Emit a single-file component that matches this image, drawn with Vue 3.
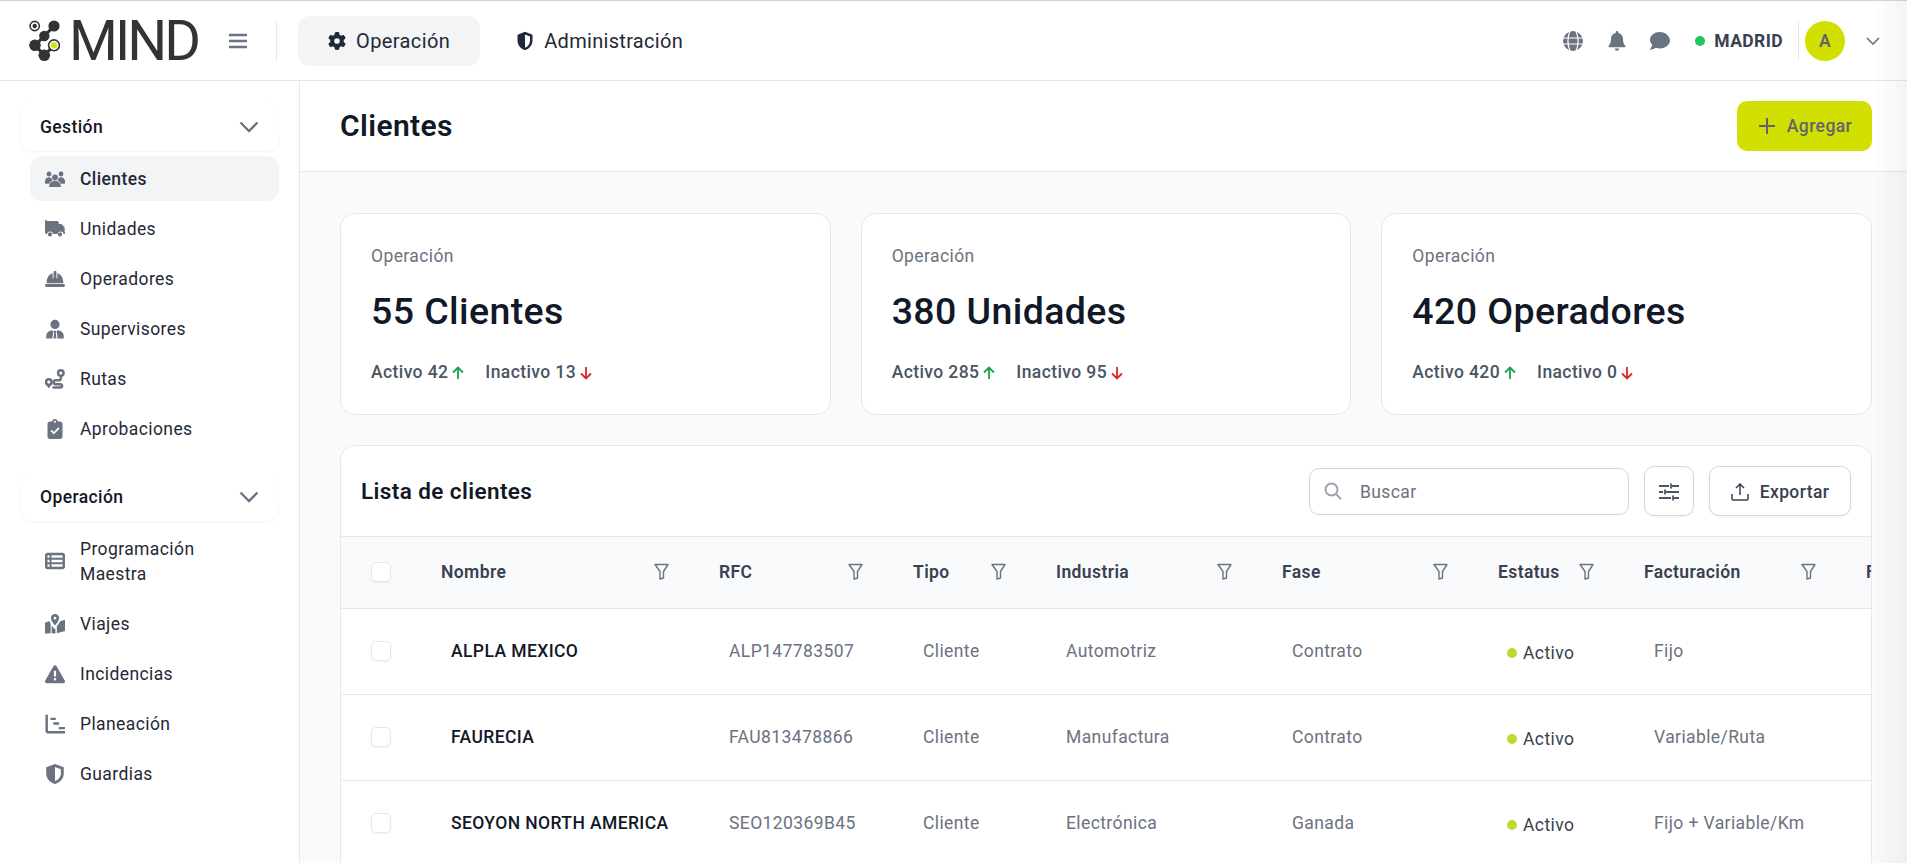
<template>
  <div class="app">
    <header class="topbar">
      <div class="logo">
        <svg class="logo-mark" viewBox="28 20 34 42" width="34" height="42">
          <path d="M54 26 44.3 36 35 45.3 44.3 55.3 54 45.3" fill="none" stroke="#333" stroke-width="3.2" />
          <circle cx="34.7" cy="26" r="4.6" fill="#fff" stroke="#333" stroke-width="1.6" />
          <circle cx="34.7" cy="26" r="2.2" fill="#333" />
          <circle cx="54" cy="26" r="5.6" fill="#333" />
          <circle cx="44.3" cy="36" r="5.2" fill="#333" />
          <circle cx="35" cy="45.3" r="5.8" fill="#333" />
          <circle cx="44.3" cy="55.3" r="5.8" fill="#333" />
          <circle cx="54" cy="45.3" r="5.4" fill="#fff" stroke="#333" stroke-width="1.6" />
          <circle cx="54" cy="45.3" r="3.2" fill="#d4e21a" />
        </svg>
        <span class="logo-text">MIND</span>
      </div>
      <button class="burger">
        <svg viewBox="0 0 18 16" width="18" height="16">
          <path d="M0 2h18M0 8h18M0 14h18" stroke="#6b7280" stroke-width="2.4" fill="none" />
        </svg>
      </button>
      <span class="vline"></span>
      <nav class="tabs">
        <a class="tab active">
          <svg viewBox="0 0 512 512" width="18" height="18"><path fill="#1f2937" :d="gearPath" /></svg>
          Operación
        </a>
        <a class="tab second">
          <svg viewBox="0 0 24 24" width="20" height="20">
            <path fill="#1f2937" fill-rule="evenodd" d="M12 1 3 4.600v6.700c0 5.600 3.700 9.900 9 11.700 5.300-1.800 9-6.100 9-11.700V4.600L12 1Zm0 3.200v15.900c3.500-1.500 6-4.700 6-8.800V6.700L12 4.200Z" />
          </svg>
          Administración
        </a>
      </nav>
      <div class="top-right">
        <svg class="top-icon" viewBox="0 0 20 20" width="20" height="20">
          <circle cx="10" cy="10" r="10" fill="#6b7280" />
          <path d="M0 7h20M0 13h20M7 0c-2.500 6-2.500 14 0 20M13 0c2.500 6 2.500 14 0 20" stroke="#fff" stroke-width="1.200" fill="none" />
        </svg>
        <svg class="top-icon" viewBox="0 0 18 20" width="18" height="20">
          <path fill="#6b7280" d="M9 0c-.8 0-1.300.6-1.300 1.300v.8C4.800 2.700 3 5 3 7.800c0 3.700-.8 5.500-2.300 7-.5.500-.2 1.400.6 1.400h15.400c.8 0 1.100-.9.600-1.400-1.500-1.500-2.300-3.300-2.300-7 0-2.800-1.800-5.100-4.700-5.700v-.8C10.300.6 9.800 0 9 0ZM6.800 17.500a2.200 2.200 0 0 0 4.400 0H6.800Z" />
        </svg>
        <svg class="top-icon" viewBox="0 0 20 18" width="20" height="18">
          <path fill="#6b7280" d="M10 0C4.500 0 0 3.500 0 7.800c0 1.900.9 3.600 2.300 5-.3 1.500-1.100 3-2.200 4.400-.1.200 0 .6.300.5 2-.2 3.800-1 5.300-2 1.300.4 2.800.7 4.300.7 5.500 0 10-3.500 10-7.800S15.500 0 10 0Z" />
        </svg>
        <span class="dot-green"></span>
        <span class="city">MADRID</span>
        <span class="vline small"></span>
        <span class="avatar">A</span>
        <svg class="top-chev" viewBox="0 0 14 8" width="14" height="8">
          <path d="M1 1l6 6 6-6" stroke="#6b7280" stroke-width="1.700" fill="none" />
        </svg>
      </div>
    </header>

    <div class="body">
      <aside class="sidebar">
        <section v-for="group in menu" :key="group.title" class="group">
          <div class="group-head">
            <span>{{ group.title }}</span>
            <svg viewBox="0 0 20 12" width="20" height="12">
              <path d="M1.500 1.500 10 10l8.500-8.500" stroke="#6b7280" stroke-width="2.300" fill="none" />
            </svg>
          </div>
          <a v-for="item in group.items" :key="item.label" class="item" :class="{ active: item.active }">
            <svg class="item-icon" viewBox="0 0 24 24" width="20" height="20" v-html="item.icon"></svg>
            <span>{{ item.label }}</span>
          </a>
        </section>
      </aside>

      <main class="main">
        <div class="page-head">
          <h1>Clientes</h1>
          <button class="btn-add">
            <svg viewBox="0 0 16 16" width="16" height="16"><path d="M8 0v16M0 8h16" stroke="#5f6470" stroke-width="2" /></svg>
            Agregar
          </button>
        </div>

        <div class="content">
          <div class="stats">
            <div v-for="stat in stats" :key="stat.title" class="stat">
              <p class="stat-label">Operación</p>
              <p class="stat-title">{{ stat.title }}</p>
              <div class="stat-foot">
                <span class="stat-part">
                  Activo {{ stat.active }}
                  <svg viewBox="0 0 12 14" width="12" height="14"><path d="M6 13V1.500M1 6.500l5-5 5 5" stroke="#16a34a" stroke-width="1.800" fill="none" /></svg>
                </span>
                <span class="stat-part">
                  Inactivo {{ stat.inactive }}
                  <svg viewBox="0 0 12 14" width="12" height="14"><path d="M6 1v11.500M1 7.500l5 5 5-5" stroke="#dc2626" stroke-width="1.800" fill="none" /></svg>
                </span>
              </div>
            </div>
          </div>

          <div class="table-card">
            <div class="toolbar">
              <h2>Lista de clientes</h2>
              <div class="tools">
                <label class="search">
                  <svg viewBox="0 0 18 18" width="18" height="18">
                    <circle cx="7.500" cy="7.500" r="6" stroke="#9ca3af" stroke-width="1.900" fill="none" />
                    <path d="M12 12l5 5" stroke="#9ca3af" stroke-width="1.900" />
                  </svg>
                  <input type="text" placeholder="Buscar" />
                </label>
                <button class="btn-tool square">
                  <svg viewBox="0 0 20 18" width="20" height="18">
                    <path d="M0 3h10M13 3h7M12 0.500v5M0 9h4M7 9h13M6 6.500v5M0 15h12M15 15h5M14 12.500v5" stroke="#4b5563" stroke-width="1.800" fill="none" />
                  </svg>
                </button>
                <button class="btn-tool">
                  <svg viewBox="0 0 18 18" width="18" height="18">
                    <path d="M9 12V1.500M5 5l4-4 4 4M1 11v5a1 1 0 0 0 1 1h14a1 1 0 0 0 1-1v-5" stroke="#374151" stroke-width="1.500" fill="none" />
                  </svg>
                  Exportar
                </button>
              </div>
            </div>

            <table class="grid">
              <colgroup>
                <col class="c-check" />
                <col v-for="col in columns" :key="col.label" :class="col.cls" />
              </colgroup>
              <thead>
                <tr>
                  <th class="cell-check"><span class="check"></span></th>
                  <th v-for="col in columns" :key="col.label">
                    <div class="th-in">
                      <span>{{ col.label }}</span>
                      <svg viewBox="0 0 15 17" width="15" height="17">
                        <path d="M1 1.500h13L9.500 8.500v6.500L6 16V8.500L1 1.500Z" stroke="#6b7280" stroke-width="1.400" fill="none" stroke-linejoin="round" />
                      </svg>
                    </div>
                  </th>
                </tr>
              </thead>
              <tbody>
                <tr v-for="row in rows" :key="row.name">
                  <td class="cell-check"><span class="check"></span></td>
                  <td class="name">{{ row.name }}</td>
                  <td>{{ row.rfc }}</td>
                  <td>{{ row.type }}</td>
                  <td>{{ row.industry }}</td>
                  <td>{{ row.phase }}</td>
                  <td><span class="status"><i></i>{{ row.status }}</span></td>
                  <td>{{ row.billing }}</td>
                  <td></td>
                </tr>
              </tbody>
            </table>
          </div>
        </div>
      </main>
    </div>
    <div class="edge-fade"></div>
  </div>
</template>

<script setup>
const gearPath =
  'M495.9 166.6c3.2 8.7 .5 18.4-6.4 24.6l-43.3 39.4c1.1 8.3 1.7 16.8 1.7 25.4s-.6 17.1-1.7 25.4l43.3 39.4c6.9 6.2 9.6 15.9 6.4 24.6c-4.4 11.9-9.7 23.3-15.8 34.3l-4.7 8.1c-6.6 11-14 21.4-22.1 31.2c-5.9 7.2-15.7 9.6-24.5 6.8l-55.7-17.7c-13.4 10.3-28.2 18.9-44 25.4l-12.5 57.1c-2 9.1-9 16.3-18.2 17.8c-13.8 2.3-28 3.5-42.5 3.5s-28.7-1.2-42.5-3.5c-9.2-1.5-16.2-8.7-18.2-17.8l-12.5-57.1c-15.8-6.5-30.6-15.1-44-25.4L83.1 425.9c-8.8 2.8-18.6 .3-24.5-6.8c-8.1-9.8-15.5-20.2-22.1-31.2l-4.7-8.1c-6.1-11-11.4-22.4-15.8-34.3c-3.2-8.7-.5-18.4 6.4-24.6l43.3-39.4C64.6 273.1 64 264.6 64 256s.6-17.1 1.7-25.4L22.4 191.2c-6.9-6.2-9.6-15.9-6.4-24.6c4.4-11.9 9.7-23.3 15.8-34.3l4.7-8.1c6.6-11 14-21.4 22.1-31.2c5.9-7.2 15.7-9.6 24.5-6.8l55.7 17.7c13.4-10.3 28.2-18.9 44-25.4l12.5-57.1c2-9.1 9-16.3 18.2-17.8C227.3 1.2 241.5 0 256 0s28.7 1.2 42.5 3.5c9.2 1.5 16.2 8.7 18.2 17.8l12.5 57.1c15.8 6.5 30.6 15.1 44 25.4l55.7-17.7c8.8-2.8 18.6-.3 24.5 6.8c8.1 9.8 15.5 20.2 22.1 31.2l4.700 8.100c6.100 11 11.400 22.400 15.800 34.300zM256 336a80 80 0 1 0 0-160 80 80 0 1 0 0 160z'

// sidebar icons, all in a 24 box
const icons = {
  users:
    '<circle cx="12" cy="10" r="3.500"/><circle cx="4.800" cy="6" r="2.900"/><circle cx="19.200" cy="6" r="2.900"/><path d="M5 21.500c0-4.800 3-7.500 7-7.500s7 2.700 7 7.500zM0 14.800C0 12 2.100 10 4.800 10c1 0 2 .3 2.800 .9.300 1.300 1 2.200 1.700 2.800-2 .8-3.500 2.200-4.200 4H1c-.6 0-1-.5-1-1zM24 14.800c0-2.800-2.100-4.800-4.800-4.800-1 0-2 .3-2.800 .9-.3 1.300-1 2.200-1.700 2.800 2 .8 3.500 2.200 4.200 4H23c.6 0 1-.5 1-1z"/>',
  truck:
    '<path fill-rule="evenodd" d="M2 2.500h12.500c1.100 0 2 .9 2 2V6h2.300c.6 0 1.100.2 1.500.6l2.700 3c.4.400.6.900.6 1.400v4.800c.5.100.9.500.9 1.100 0 .6-.4 1.100-1 1.100h-1.100a3.800 3.800 0 0 0-7.400 0H9.700a3.800 3.800 0 0 0-7.400 0H2c-1.100 0-2-.9-2-2v-13c0-1.100.9-2 2-2Z"/><circle cx="6" cy="18.500" r="2.500"/><circle cx="18" cy="18.500" r="2.500"/>',
  helmet:
    '<path d="M2 16.500C2 10 4.800 6.300 9.200 5V11h1.100V3.200c0-.5.400-.9 .9-.9h1.600c.5 0 .9 .4 .9 .9V11h1.100V5c4.400 1.300 7.200 5 7.200 11.500v.5H2z"/><rect x="0" y="18" width="24" height="3.500" rx="1.700"/>',
  supervisor:
    '<circle cx="12" cy="6.500" r="5.500"/><path d="M1.500 23.500v-2.800c0-3.700 2.700-6.700 7-7.200l1.500 1-1.200 9zM22.500 23.500v-2.800c0-3.700-2.700-6.700-7-7.200l-1.500 1 1.200 9zM10.800 14h2.400l.4 2-.6 1 .8 6.500h-3.600l.8-6.500-.6-1z"/>',
  route:
    '<path fill="none" stroke="currentColor" stroke-width="3" d="M19 9v2c0 1.500-1 2.500-2.500 2.500h-3.500c-1.600 0-2.700 1-2.700 2.400s1.100 2.400 2.700 2.400h5c1.500 0 2.500 1 2.500 2.100s-.7 1.700-1.700 1.700H9"/><circle fill="none" stroke="currentColor" stroke-width="3" cx="19" cy="4.800" r="3.300"/><circle fill="none" stroke="currentColor" stroke-width="3" cx="4.500" cy="15.500" r="3.300"/><path d="M4.500 23.500 1.500 19h6z"/>',
  clipboard:
    '<path fill-rule="evenodd" d="M8.500 3C8.800 1.300 10.200 0 12 0s3.200 1.300 3.500 3H18c1.700 0 3 1.300 3 3v15c0 1.700-1.300 3-3 3H6c-1.700 0-3-1.300-3-3V6c0-1.700 1.300-3 3-3h2.500ZM12 2a1.300 1.300 0 1 0 0 2.600A1.300 1.300 0 0 0 12 2Zm5.500 9.500L16 10l-5.500 5.500L8 13l-1.500 1.500 4 4 7-7Z"/>',
  table:
    '<path fill-rule="evenodd" d="M3 2h18c1.700 0 3 1.300 3 3v14c0 1.700-1.300 3-3 3H3c-1.700 0-3-1.300-3-3V5c0-1.700 1.300-3 3-3Zm0 3.200V8h2.500V5.200H3Zm4.800 0V8H21V5.200H7.800ZM3 10.500v3h2.500v-3H3Zm4.800 0v3H21v-3H7.800ZM3 16v2.800h2.500V16H3Zm4.800 0v2.800H21V16H7.800Z"/>',
  map:
    '<path fill-rule="evenodd" d="M12 0c-2.800 0-5 2.100-5 4.800 0 2.500 3 6.600 4.300 8.200.4.400 1 .4 1.400 0C14 11.400 17 7.300 17 4.800 17 2.100 14.800 0 12 0Zm0 3.300a1.700 1.700 0 1 1 0 3.400 1.700 1.700 0 0 1 0-3.400Z"/><path d="M0 10.500 5.300 8.300c.3 1 .9 2.200 1.500 3.300V23L0 23.500zM24 7l-5.800 1.800c-.8 2-2.500 4.200-4 6V23l9.800-2.500zM8 13.700c1 1.500 2.200 2.800 3 3.800.4.400 1 .5 1.500.2v5.600L8 23z"/>',
  warning:
    '<path fill-rule="evenodd" d="M12 1.500c.8 0 1.500.4 1.900 1.100l9.800 17.300c.8 1.400-.2 3.100-1.900 3.100H2.200c-1.700 0-2.700-1.700-1.900-3.100L10.100 2.600c.4-.7 1.100-1.100 1.900-1.100Zm-1.300 6.500v7h2.600V8h-2.600Zm1.300 8.800a1.500 1.500 0 1 0 0 3 1.500 1.500 0 0 0 0-3Z"/>',
  gantt:
    '<path d="M.5 1h3v18.500c0 .6.400 1 1 1H24v3H4c-2 0-3.500-1.500-3.500-3.500V1zM6.500 4.500H13v2.800H6.500zM10 10h7v2.800h-7zM16.500 15.500H24v2.800h-7.500z"/>',
  shield:
    '<path fill-rule="evenodd" d="M12 0 1.500 4v7.500c0 5.800 4 10.600 10.500 12.500 6.500-1.900 10.500-6.700 10.500-12.500V4L12 0Zm0 3.500v17c4.200-1.600 7-5 7-9V6.200L12 3.500Z"/>',
}

const menu = [
  {
    title: 'Gestión',
    items: [
      { label: 'Clientes', icon: icons.users, active: true },
      { label: 'Unidades', icon: icons.truck },
      { label: 'Operadores', icon: icons.helmet },
      { label: 'Supervisores', icon: icons.supervisor },
      { label: 'Rutas', icon: icons.route },
      { label: 'Aprobaciones', icon: icons.clipboard },
    ],
  },
  {
    title: 'Operación',
    items: [
      { label: 'Programación Maestra', icon: icons.table },
      { label: 'Viajes', icon: icons.map },
      { label: 'Incidencias', icon: icons.warning },
      { label: 'Planeación', icon: icons.gantt },
      { label: 'Guardias', icon: icons.shield },
    ],
  },
]

const stats = [
  { title: '55 Clientes', active: 42, inactive: 13 },
  { title: '380 Unidades', active: 285, inactive: 95 },
  { title: '420 Operadores', active: 420, inactive: 0 },
]

const columns = [
  { label: 'Nombre', cls: 'c-name' },
  { label: 'RFC', cls: 'c-rfc' },
  { label: 'Tipo', cls: 'c-type' },
  { label: 'Industria', cls: 'c-industry' },
  { label: 'Fase', cls: 'c-phase' },
  { label: 'Estatus', cls: 'c-status' },
  { label: 'Facturación', cls: 'c-billing' },
  { label: 'Frecuencia', cls: 'c-last' },
]

const rows = [
  { name: 'ALPLA MEXICO', rfc: 'ALP147783507', type: 'Cliente', industry: 'Automotriz', phase: 'Contrato', status: 'Activo', billing: 'Fijo' },
  { name: 'FAURECIA', rfc: 'FAU813478866', type: 'Cliente', industry: 'Manufactura', phase: 'Contrato', status: 'Activo', billing: 'Variable/Ruta' },
  { name: 'SEOYON NORTH AMERICA', rfc: 'SEO120369B45', type: 'Cliente', industry: 'Electrónica', phase: 'Ganada', status: 'Activo', billing: 'Fijo + Variable/Km' },
]
</script>

<style>
html,
body {
  margin: 0;
  overflow: hidden;
}
</style>

<style scoped>
.app {
  position: relative;
  height: 100vh;
  display: flex;
  flex-direction: column;
  overflow: hidden;
  font-family: Roboto, 'Liberation Sans', sans-serif;
  font-size: 17.5px;
  letter-spacing: 0.4px;
  color: #1f2937;
  background: #fff;
}

.edge-fade {
  position: absolute;
  top: 0;
  right: 0;
  bottom: 0;
  width: 34px;
  background: linear-gradient(to right, rgba(0, 0, 0, 0), rgba(0, 0, 0, 0.045));
  pointer-events: none;
}

.topbar {
  height: 79px;
  flex: none;
  display: flex;
  align-items: center;
  background: #fff;
  border-top: 1px solid #d1d5db;
  border-bottom: 1px solid #e5e7eb;
}

.logo {
  display: flex;
  align-items: center;
  margin-left: 28px;
  width: 172px;
}

.logo-mark {
  flex: none;
}

.logo-text {
  font-size: 56px;
  line-height: 1;
  font-weight: 450;
  letter-spacing: -2.9px;
  color: #333;
  margin-left: 7px;
}

.burger {
  margin-left: 29px;
  border: none;
  background: none;
  padding: 0;
  width: 18px;
  height: 16px;
  display: flex;
}

.vline {
  width: 1px;
  height: 40px;
  background: #e5e7eb;
  margin-left: 29px;
}

.tabs {
  display: flex;
  margin-left: 21px;
}

.tab {
  height: 50px;
  display: flex;
  align-items: center;
  gap: 10px;
  padding: 0 30px;
  border-radius: 12px;
  font-size: 20px;
  letter-spacing: 0.4px;
  color: #1f2937;
}

.tab.active {
  background: #f3f4f6;
}

.tab.second {
  padding-left: 35px;
  gap: 9px;
  letter-spacing: 0.3px;
}

.top-right {
  margin-left: auto;
  display: flex;
  align-items: center;
  padding-right: 27px;
}

.top-icon {
  display: block;
}

.top-icon:nth-child(2) {
  margin-left: 25px;
}

.top-icon:nth-child(3) {
  margin-left: 24px;
}

.dot-green {
  width: 10px;
  height: 10px;
  border-radius: 50%;
  background: #22c55e;
  margin-left: 25px;
}

.city {
  font-weight: 700;
  color: #374151;
  margin-left: 9px;
}

.vline.small {
  margin-left: 15px;
}

.avatar {
  width: 40px;
  height: 40px;
  border-radius: 50%;
  background: #d1e000;
  color: #5f6470;
  font-weight: 600;
  display: flex;
  align-items: center;
  justify-content: center;
  margin-left: 6px;
}

.top-chev {
  margin-left: 21px;
}

.body {
  flex: 1;
  min-height: 0;
  display: flex;
}

.sidebar {
  width: 300px;
  flex: none;
  box-sizing: border-box;
  background: #fff;
  border-right: 1px solid #e5e7eb;
  padding: 21px 20px 0;
}

.group + .group {
  margin-top: 21px;
}

.group-head {
  height: 49px;
  display: flex;
  align-items: center;
  justify-content: space-between;
  padding: 0 20px;
  border-radius: 12px;
  background: #fff;
  box-shadow: 0 1px 3px rgba(0, 0, 0, 0.05);
  font-weight: 500;
  color: #111827;
}

.item {
  display: flex;
  align-items: center;
  gap: 15px;
  margin: 5px 0 0 10px;
  padding: 11px 15px 9px;
  min-height: 25px;
  line-height: 25px;
  border-radius: 12px;
  color: #1f2937;
}

.item span {
  max-width: 160px;
}

.item.active {
  background: #f3f4f6;
  font-weight: 500;
}

.item-icon {
  flex: none;
  margin-top: -2px;
  fill: #6b7280;
  color: #6b7280;
}

.main {
  flex: 1;
  min-width: 0;
  display: flex;
  flex-direction: column;
  background: #f9fafb;
}

.page-head {
  height: 91px;
  flex: none;
  box-sizing: border-box;
  display: flex;
  align-items: center;
  justify-content: space-between;
  padding: 0 35px 0 40px;
  background: #fff;
  border-bottom: 1px solid #e5e7eb;
}

.page-head h1 {
  margin: 0 0 2px;
  font-size: 30px;
  font-weight: 600;
  color: #111827;
}

.btn-add {
  width: 135px;
  height: 50px;
  padding: 0 0 0 2px;
  display: flex;
  align-items: center;
  justify-content: center;
  gap: 12px;
  background: #d1e000;
  border: none;
  border-radius: 10px;
  font: 500 17.5px Roboto, sans-serif;
  letter-spacing: 0.4px;
  color: #5f6470;
}

.content {
  padding: 41px 35px 0 40px;
}

.stats {
  display: grid;
  grid-template-columns: repeat(3, 1fr);
  gap: 30px;
}

.stat {
  height: 202px;
  box-sizing: border-box;
  padding: 30px;
  background: #fff;
  border: 1px solid #e5e7eb;
  border-radius: 15px;
}

.stat p {
  margin: 0;
}

.stat-label {
  line-height: 25px;
  color: #6b7280;
}

.stat-title {
  font-size: 37.5px;
  line-height: 45px;
  font-weight: 500;
  color: #111827;
  margin-top: 20px !important;
}

.stat-foot {
  display: flex;
  gap: 21px;
  margin-top: 26px;
  line-height: 25px;
  font-weight: 500;
  color: #4b5563;
}

.stat-part {
  display: flex;
  align-items: center;
  gap: 4px;
}

.table-card {
  margin-top: 30px;
  background: #fff;
  border: 1px solid #e5e7eb;
  border-radius: 15px 15px 0 0;
  overflow: hidden;
}

.toolbar {
  height: 90px;
  display: flex;
  align-items: center;
  justify-content: space-between;
  padding: 0 20px;
  border-bottom: 1px solid #e5e7eb;
}

.toolbar h2 {
  margin: 0;
  font-size: 22.5px;
  font-weight: 600;
  color: #111827;
}

.tools {
  display: flex;
  align-items: center;
}

.search {
  width: 320px;
  height: 47px;
  box-sizing: border-box;
  display: flex;
  align-items: center;
  gap: 18px;
  padding: 0 14px;
  border: 1px solid #d1d5db;
  border-radius: 10px;
}

.search input {
  border: none;
  outline: none;
  padding: 2px 0 0;
  flex: 1;
  min-width: 0;
  font: 400 17.5px Roboto, sans-serif;
  letter-spacing: 0.4px;
  color: #374151;
}

.search input::placeholder {
  color: #6b7280;
}

.btn-tool {
  height: 50px;
  width: 142px;
  margin-left: 15px;
  padding: 1px 0 0;
  display: flex;
  align-items: center;
  justify-content: center;
  gap: 11px;
  background: #fff;
  border: 1px solid #d1d5db;
  border-radius: 10px;
  box-shadow: 0 1px 2px rgba(0, 0, 0, 0.05);
  font: 500 17.5px Roboto, sans-serif;
  letter-spacing: 0.4px;
  color: #374151;
}

.btn-tool.square {
  width: 50px;
  margin-left: 15px;
}

.grid {
  table-layout: fixed;
  width: 1701px;
  border-collapse: collapse;
}

.c-check { width: 76px; }
.c-name { width: 278px; }
.c-rfc { width: 194px; }
.c-type { width: 143px; }
.c-industry { width: 226px; }
.c-phase { width: 216px; }
.c-status { width: 146px; }
.c-billing { width: 222px; }
.c-last { width: 200px; }

th {
  height: 71px;
  padding: 0 26px 1px 24px;
  box-sizing: border-box;
  background: #f9fafb;
  border-bottom: 1px solid #e5e7eb;
  text-align: left;
  font-weight: 600;
  color: #374151;
}

.th-in {
  display: flex;
  align-items: center;
  justify-content: space-between;
  white-space: nowrap;
}

.th-in svg {
  flex: none;
}

td {
  height: 86px;
  box-sizing: border-box;
  padding: 0 0 0 34px;
  border-bottom: 1px solid #e5e7eb;
  color: #6b7280;
  white-space: nowrap;
}

td.name {
  font-weight: 500;
  color: #111827;
}

th.cell-check,
td.cell-check {
  padding: 0 0 0 30px;
}

.check {
  display: block;
  width: 20px;
  height: 20px;
  box-sizing: border-box;
  background: #fff;
  border: 1px solid #e5e7eb;
  border-radius: 5px;
  box-shadow: 0 1px 2px rgba(0, 0, 0, 0.05);
}

.status {
  display: inline-flex;
  align-items: center;
  gap: 6px;
  position: relative;
  top: 1px;
  left: -1px;
  color: #374151;
}

.status i {
  width: 10px;
  height: 10px;
  border-radius: 50%;
  background: #c3d82c;
}
</style>
